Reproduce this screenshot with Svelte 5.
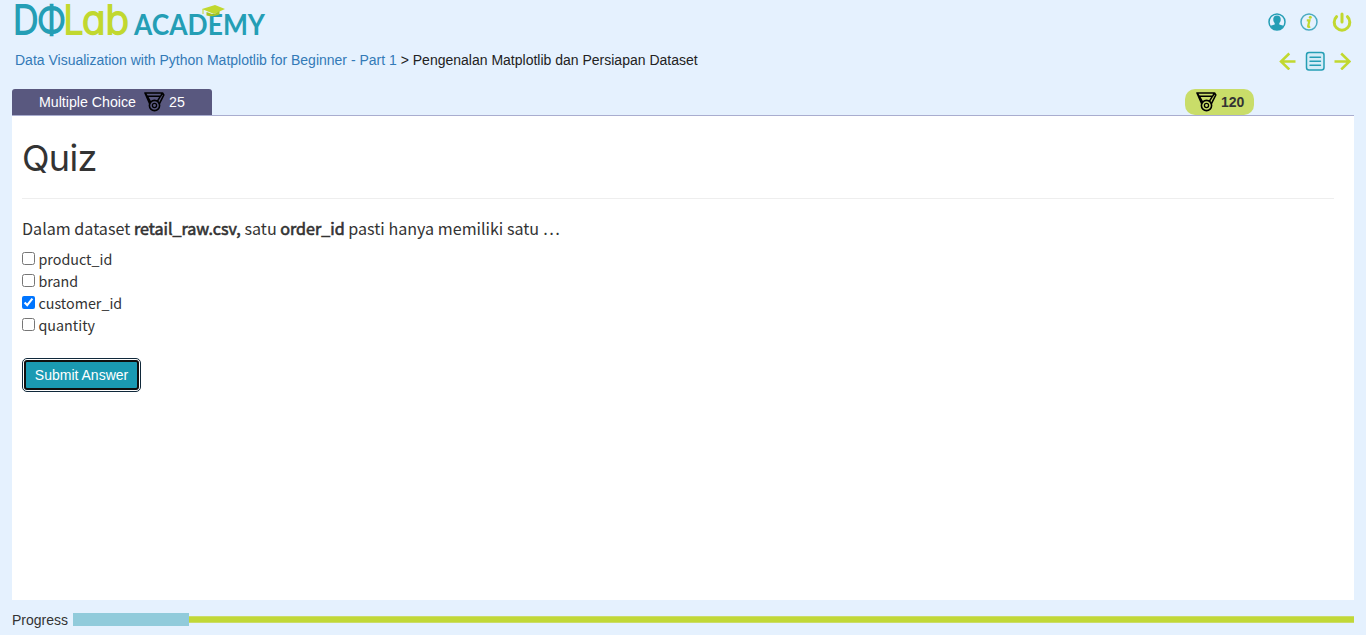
<script>
  let options = $state([
    { name: 'product_id', checked: false },
    { name: 'brand', checked: false },
    { name: 'customer_id', checked: true },
    { name: 'quantity', checked: false }
  ]);
  const progress = 9.06;
</script>

{#snippet medal()}
  <svg class="medal" width="21" height="20" viewBox="0 0 21 20" fill="none" stroke="#000" stroke-width="1.6" stroke-linejoin="round">
    <path d="M3.200 4.200 1 1h17.500l-1.800 3.200H3.200l3.600 6.200M1 1l4.700 10.800M18.500 1l1.300 2-4.500 8.800M16.500 4.200l-3.200 5.200" />
    <circle cx="10.500" cy="13.500" r="5.100" />
    <circle cx="10.500" cy="13.500" r="2.100" stroke-width="1.300" />
  </svg>
{/snippet}

<div class="page">
  <header>
    <svg class="logo" width="256" height="40" viewBox="0 0 256 40">
      <g class="mark">
        <text x="0" y="34.300" textLength="25.500" lengthAdjust="spacingAndGlyphs" fill="#249eb5" stroke="#249eb5">D</text>
        <text x="24.200" y="34.300" textLength="28.500" lengthAdjust="spacingAndGlyphs" fill="#249eb5" stroke="#249eb5">Φ</text>
        <text x="50.500" y="34.300" textLength="20" lengthAdjust="spacingAndGlyphs" fill="#c1d82f" stroke="#c1d82f">L</text>
        <text x="69" y="34.300" textLength="47" lengthAdjust="spacingAndGlyphs" fill="#c1d82f" stroke="#c1d82f">ab</text>
      </g>
      <text class="academy" x="121" y="34.500" textLength="131" lengthAdjust="spacingAndGlyphs">ACADEMY</text>
      <path d="M189 9l13-4 10 4-11 5z" fill="#c1d82f" />
      <path d="M193.500 12v3.500q6 2 13-1V11l-6 3.500z" fill="#a8c522" />
      <path d="M190 9v5" stroke="#c1d82f" />
    </svg>
    <div class="actions">
      <svg width="18" height="18" viewBox="0 0 18 18">
        <circle cx="9" cy="9" r="8" fill="#e6f1fe" stroke="#249eb5" stroke-width="1.500" />
        <path d="M9 2.500c-2.800 0-4 1.900-3.700 4.500.1 1.300.7 2.300 1.400 3v1.400l-4.200 1.300Q4.900 17 9 17t6.500-4.300l-4.200-1.300V10c.7-.7 1.300-1.700 1.400-3C13 4.400 11.800 2.500 9 2.500z" fill="#249eb5" />
      </svg>
      <svg width="18" height="18" viewBox="0 0 18 18">
        <circle cx="9" cy="9" r="8" fill="none" stroke="#4aabc1" stroke-width="1.500" />
        <path d="M6.800 7.300h2.700L8.100 13.300q0 1 2.100.1" fill="none" stroke="#c1d82f" stroke-width="2.200" />
        <circle cx="10.300" cy="4.300" r="1.500" fill="#c1d82f" />
      </svg>
      <svg width="20" height="20" viewBox="0 0 20 20" fill="none" stroke="#c1d82f" stroke-width="3" stroke-linecap="round">
        <path d="M10 2v8M4.600 4.700a7.800 7.800 0 1 0 10.800 0" />
      </svg>
    </div>
  </header>

  <nav>
    <div class="crumbs"><a href="#course">Data Visualization with Python Matplotlib for Beginner - Part 1</a> &gt; Pengenalan Matplotlib dan Persiapan Dataset</div>
    <div class="pager">
      <svg width="17" height="18" viewBox="0 0 17 18" fill="none" stroke="#c1d82f" stroke-width="2.500"><path d="M16.500 9.500H2M10.300 1.500 2 9.500l8.300 8" /></svg>
      <svg width="20" height="20" viewBox="0 0 20 20" fill="none" stroke="#249eb5">
        <rect x="1.500" y="1.500" width="17.500" height="17.500" rx="2.500" fill="#d4ecf7" stroke-width="1.500" />
        <path d="M5 6.300h10.500M5 10.300h10.500M5 14.300h10.500" stroke-width="1.400" stroke-linecap="round" />
      </svg>
      <svg width="17" height="18" viewBox="0 0 17 18" fill="none" stroke="#c1d82f" stroke-width="2.500"><path d="M.5 9.500h15M7.200 1.500l8.300 8-8.300 8" /></svg>
    </div>
  </nav>

  <div class="tabs">
    <div class="tab">Multiple Choice {@render medal()} 25</div>
    <div class="score">{@render medal()} 120</div>
  </div>

  <main>
    <h1>Quiz</h1>
    <hr />
    <p>Dalam dataset <b>retail_raw.csv,</b> satu <b>order_id</b> pasti hanya memiliki satu …</p>
    <div class="options">
      {#each options as option}
        <label><input type="checkbox" bind:checked={option.checked} /><span>{option.name}</span></label>
      {/each}
    </div>
    <button>Submit Answer</button>
  </main>

  <footer>
    <span>Progress</span>
    <div class="track">
      <div class="done" style="width: {progress}%"></div>
      <div class="rest"></div>
    </div>
  </footer>
</div>

<style>
  :global(body) { background: #e5f1fe; overflow: hidden; }
  .page {
    box-sizing: border-box;
    height: 635px;
    padding: 0 12px;
    display: flex;
    flex-direction: column;
    font: 14px/20px "Liberation Sans", Arial, sans-serif;
    color: #333;
    background: #e5f1fe;
  }
  svg { display: block; flex: none; }
  header { height: 43px; display: flex; justify-content: space-between; }
  .logo { margin-left: 1px; overflow: visible; }
  .mark { font: 300 39px Inter, sans-serif; font-feature-settings: "cv11"; stroke-width: 1.800px; }
  .academy { font: 700 28px Lato, sans-serif; fill: #249eb5; }
  .actions { display: flex; align-items: center; height: 43px; gap: 14px; padding-right: 2px; }
  nav { height: 46px; display: flex; justify-content: space-between; }
  .crumbs { padding: 7px 0 0 3px; color: #222; white-space: nowrap; }
  a { color: #337ab7; text-decoration: none; }
  .pager { display: flex; align-items: center; height: 36px; gap: 9px; padding-right: 3px; }
  .tabs { height: 26px; flex: none; display: flex; justify-content: space-between; border-bottom: 1px solid #a9adcf; }
  .tab {
    box-sizing: border-box;
    width: 200px;
    padding-left: 27px;
    display: flex;
    align-items: center;
    color: #fff;
    background: #59587f;
    border-radius: 3px 3px 0 0;
    font-size: 14.200px;
  }
  .medal { margin: 0 4px 0 0; }
  .tab .medal { margin-left: 8px; }
  .score {
    box-sizing: border-box;
    width: 69px;
    margin-right: 100px;
    padding-left: 11px;
    display: flex;
    align-items: center;
    background: #c9dd69;
    border-radius: 10px;
    font-weight: 700;
  }
  main { box-sizing: border-box; height: 484px; flex: none; padding: 22px 20px 0 10px; background: #fff; font-family: "Noto Sans CJK SC", sans-serif; }
  h1 { margin: 0; font: 400 36px/40px Inter, sans-serif; letter-spacing: -.7px; }
  hr { margin: 20px 0 18px; border: 0; border-top: 1px solid #eee; }
  p { margin: 0 0 9px; font-size: 16.130px; line-height: 22px; }
  b { font-weight: 400; -webkit-text-stroke: .6px #333; }
  .options { display: flex; flex-direction: column; font-size: 14.300px; }
  label { display: flex; height: 22px; align-items: center; }
  input { width: 13px; height: 13px; margin: 0 3.500px 2px 0; }
  button {
    display: block;
    width: 115px;
    height: 30px;
    margin: 24px 0 0 2px;
    padding: 0;
    border: 2px solid #101010;
    border-radius: 3px;
    outline: 1px solid #10283a;
    outline-offset: 1px;
    color: #fff;
    background: #1a9ab3;
    font: 14px "Liberation Sans", Arial, sans-serif;
  }
  footer { flex: 1; display: flex; align-items: center; padding-top: 4px; gap: 5px; }
  .track { flex: 1; height: 13px; display: flex; align-items: center; }
  .done { height: 13px; background: #91cbdb; }
  .rest { flex: 1; height: 7px; box-sizing: border-box; background: #c1d837; border: solid #cbdc68; border-width: 1px 0; }
</style>
